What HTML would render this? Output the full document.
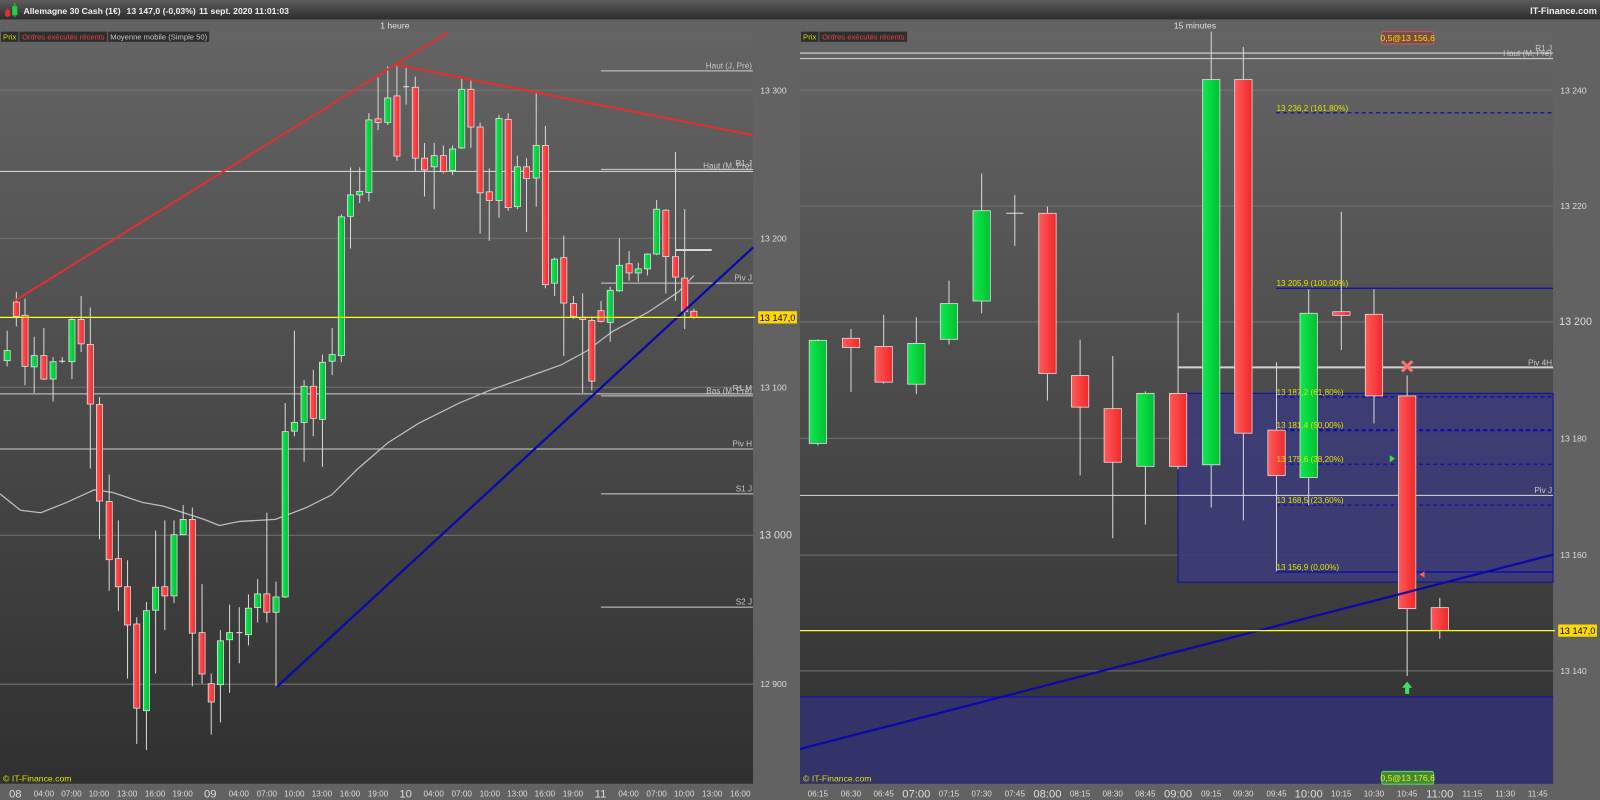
<!DOCTYPE html>
<html><head><meta charset="utf-8"><style>
html,body{margin:0;padding:0;background:#5f5f5f;overflow:hidden}
svg{display:block}
text{font-family:"Liberation Sans",Arial,sans-serif}
</style></head><body>
<svg id="s" width="1600" height="800" viewBox="0 0 3136 1568" xmlns="http://www.w3.org/2000/svg">
<defs>
<linearGradient id="top" x1="0" y1="0" x2="0" y2="1"><stop offset="0" stop-color="#5c5c5c"/><stop offset="1" stop-color="#2c2c2c"/></linearGradient>
<linearGradient id="plot" x1="0" y1="0" x2="0" y2="1"><stop offset="0" stop-color="#646464"/><stop offset="1" stop-color="#303030"/></linearGradient>
<linearGradient id="gG" x1="0" y1="0" x2="1" y2="0"><stop offset="0" stop-color="#10e850"/><stop offset="1" stop-color="#00c030"/></linearGradient>
<linearGradient id="gR" x1="0" y1="0" x2="1" y2="0"><stop offset="0" stop-color="#ff5a5a"/><stop offset="1" stop-color="#f02828"/></linearGradient>
</defs>
<rect x="0" y="0" width="3136" height="1568" fill="#626262"/>
<rect x="0" y="0" width="3136" height="38" fill="url(#top)"/>
<rect x="0" y="62" width="1476" height="1474" fill="url(#plot)"/>
<rect x="1568" y="62" width="1476" height="1474" fill="url(#plot)"/>
<g id="L"></g>
<g id="R" transform="translate(1568,0)"></g>

<rect x="10" y="20" width="10" height="12" fill="#e03030"/><line x1="15" y1="16" x2="15" y2="34" stroke="#e03030" stroke-width="2"/>
<rect x="24" y="12" width="10" height="18" fill="#20d040"/><line x1="29" y1="6" x2="29" y2="34" stroke="#20d040" stroke-width="2"/>
<g font-size="17" fill="#f0f0f0" font-weight="bold">
<text x="46" y="27">Allemagne 30 Cash (1€)</text>
<text x="248" y="27">13 147,0 (-0,03%)</text>
<text x="390" y="27">11 sept. 2020 11:01:03</text>
</g>
<text x="3130" y="27" font-size="18" fill="#f0f0f0" font-weight="bold" text-anchor="end">IT-Finance.com</text>
<text x="774" y="56" font-size="17" fill="#e0e0e0" text-anchor="middle">1 heure</text>
<text x="2342" y="56" font-size="17" fill="#e0e0e0" text-anchor="middle">15 minutes</text>

<rect x="2" y="62" width="34" height="20" fill="#2e2e2e"/><text x="6" y="77" font-size="15" fill="#d8d800" textLength="26">Prix</text>
<rect x="38" y="62" width="172" height="20" fill="#2e2e2e"/><text x="43" y="77" font-size="15" fill="#e04848" textLength="162">Ordres exécutés récents</text>
<rect x="212" y="62" width="198" height="20" fill="#2e2e2e"/><text x="216" y="77" font-size="15" fill="#c8c8c8" textLength="190">Moyenne mobile (Simple 50)</text>
<rect x="1570" y="62" width="34" height="20" fill="#2e2e2e"/><text x="1574" y="77" font-size="15" fill="#d8d800" textLength="26">Prix</text>
<rect x="1606" y="62" width="172" height="20" fill="#2e2e2e"/><text x="1611" y="77" font-size="15" fill="#e04848" textLength="162">Ordres exécutés récents</text>

<g font-size="17" fill="#dcdcdc">
<text x="1490" y="183">13 300</text><text x="1490" y="473">13 200</text><text x="1490" y="765">13 100</text>
<text x="1488" y="1055" font-size="21">13 000</text><text x="1490" y="1347">12 900</text>
<text x="3058" y="183">13 240</text><text x="3058" y="410">13 220</text><text x="3056" y="637" font-size="21">13 200</text>
<text x="3058" y="865">13 180</text><text x="3058" y="1094">13 160</text><text x="3058" y="1321">13 140</text>
</g>
<rect x="1486" y="610" width="76" height="24" fill="#ffd800"/><text x="1489" y="629" font-size="18" fill="#000" textLength="70">13 147,0</text>
<rect x="3054" y="1224" width="76" height="24" fill="#ffd800"/><text x="3057" y="1243" font-size="18" fill="#000" textLength="70">13 147,0</text>

<g font-size="16" fill="#c8c8c8" text-anchor="end">
<text x="1474" y="134">Haut (J, Pré)</text><text x="1474" y="330">Haut (M, Pré)</text><text x="1474" y="325">R1 J</text>
<text x="1474" y="550">Piv J</text><text x="1474" y="771">Bas (M, Pré)</text><text x="1474" y="766">R1 M</text>
<text x="1474" y="875">Piv H</text><text x="1474" y="963">S1 J</text><text x="1474" y="1185">S2 J</text>
<text x="3042" y="100">R1 J</text><text x="3042" y="110">Haut (M, Pré)</text>
<text x="3042" y="716">Piv 4H</text><text x="3042" y="966">Piv J</text>
</g>
<g font-size="16" fill="#e0e000">
<text x="2502" y="218">13 236,2 (161,80%)</text><text x="2502" y="561">13 205,9 (100,00%)</text>
<text x="2502" y="774">13 187,2 (61,80%)</text><text x="2502" y="839">13 181,4 (50,00%)</text>
<text x="2502" y="906">13 175,6 (38,20%)</text><text x="2502" y="986">13 168,5 (23,60%)</text>
<text x="2502" y="1117">13 156,9 (0,00%)</text>
</g>
<text x="6" y="1532" font-size="17" fill="#e0e000">© IT-Finance.com</text>
<text x="1574" y="1532" font-size="17" fill="#e0e000">© IT-Finance.com</text>

<rect x="2708" y="62" width="102" height="24" rx="4" fill="#7a4a48" stroke="#c85a5a" stroke-width="2"/><text x="2759" y="80" font-size="17" fill="#f0e000" text-anchor="middle">0,5@13 156,6</text>
<rect x="2708" y="1512" width="102" height="25" rx="4" fill="#3f8a3a" stroke="#6c6" stroke-width="2"/><text x="2759" y="1531" font-size="17" fill="#f0f000" text-anchor="middle">0,5@13 176,6</text>

<g id="T" font-size="16" fill="#dcdcdc" text-anchor="middle"></g>
</svg>
<script>
var NS="http://www.w3.org/2000/svg";
function el(p,t,a){var e=document.createElementNS(NS,t);for(var k in a)e.setAttribute(k,a[k]);p.appendChild(e);return e;}
var L=document.getElementById('L'),R=document.getElementById('R'),T=document.getElementById('T');
[177,467,759,1049,1341].forEach(function(y){el(L,'line',{x1:0,x2:1476,y1:y,y2:y,stroke:'#727272','stroke-width':2});});
[177,404,631,859,1088,1315].forEach(function(y){el(R,'line',{x1:0,x2:1476,y1:y,y2:y,stroke:'#727272','stroke-width':2});});
el(R,'rect',{x:0,y:1366,width:1476,height:170,fill:'#33336a'});
el(R,'line',{x1:0,x2:1476,y1:1366,y2:1366,stroke:'#1010b0','stroke-width':2});
el(R,'rect',{x:741,y:771,width:735,height:370,fill:'#3c3c78',opacity:0.9,stroke:'#0a0aa8','stroke-width':2});
[336,772,880].forEach(function(y){el(L,'line',{x1:0,x2:1476,y1:y,y2:y,stroke:'#d0d0d0','stroke-width':2});});
[139,332,555,776,968,1190].forEach(function(y){el(L,'line',{x1:1178,x2:1476,y1:y,y2:y,stroke:'#d0d0d0','stroke-width':2});});
el(L,'line',{x1:1325,x2:1395,y1:490,y2:490,stroke:'#d8d8d8','stroke-width':4});
el(L,'polyline',{points:'0,968 40,1000 80,1005 130,985 185,960 220,965 280,985 320,992 360,1005 400,1018 430,1030 470,1022 540,1018 600,995 650,970 700,920 760,868 820,830 900,790 960,765 1050,733 1100,715 1150,688 1200,650 1270,612 1330,572 1360,540',fill:'none',stroke:'#bdbdbd','stroke-width':2.5});
[104,115,971].forEach(function(y){el(R,'line',{x1:0,x2:1476,y1:y,y2:y,stroke:'#d8d8d8','stroke-width':2});});
el(R,'line',{x1:741,x2:1476,y1:720,y2:720,stroke:'#d0d0d0','stroke-width':4});
[[221,1],[778,1],[843,2],[910,1],[990,1]].forEach(function(a){el(R,'line',{x1:933,x2:1476,y1:a[0],y2:a[0],stroke:'#0c0cb4','stroke-width':a[1]*2+0.5,'stroke-dasharray':'8,6'});});
[565,1121].forEach(function(y){el(R,'line',{x1:933,x2:1476,y1:y,y2:y,stroke:'#0c0cb4','stroke-width':2.5});});
function candles(g,arr,w){arr.forEach(function(c){var x=c[0];
 el(g,'line',{x1:x,x2:x,y1:c[4],y2:c[5],stroke:'#d8d8d8','stroke-width':2});
 if(c[1]=='D'){el(g,'line',{x1:x-w/2,x2:x+w/2,y1:c[2],y2:c[2],stroke:'#e0e0e0','stroke-width':2});return;}
 el(g,'rect',{x:x-w/2,y:c[2],width:w,height:Math.max(2,c[3]-c[2]),fill:c[1]=='G'?'url(#gG)':'url(#gR)',stroke:'#e6e6e6','stroke-width':1.5});});}
candles(L,[[14,'G',687,707,648,718],[32,'R',592,620,572,640],[49,'R',618,718,585,755],[67,'G',697,719,660,770],[86,'R',697,743,643,745],[104,'G',709,743,700,787],[122,'D',708,708,700,712],[141,'G',626,709,620,743],[159,'R',626,674,580,690],[177,'R',675,792,603,918],[195,'R',793,982,778,1057],[214,'R',983,1097,930,1158],[232,'R',1095,1150,1020,1198],[250,'R',1150,1225,1098,1330],[268,'R',1223,1388,1210,1458],[287,'G',1197,1393,1180,1470],[305,'G',1151,1196,1040,1320],[323,'R',1150,1168,1020,1235],[341,'G',1048,1168,1020,1182],[359,'G',1018,1048,990,1040],[377,'R',1018,1241,995,1345],[396,'R',1240,1321,1145,1340],[414,'R',1340,1376,1320,1440],[432,'G',1256,1342,1235,1416],[450,'G',1240,1254,1185,1358],[469,'D',1240,1240,1190,1300],[487,'G',1192,1244,1165,1265],[505,'G',1164,1191,1135,1220],[523,'R',1164,1200,1005,1220],[541,'G',1170,1200,1140,1345],[559,'G',846,1170,790,1172],[577,'G',828,845,648,855],[596,'G',757,828,745,905],[614,'R',757,820,725,855],[632,'G',710,822,695,915],[651,'G',695,708,643,735],[669,'G',425,697,420,710],[687,'G',382,424,328,487],[705,'G',375,382,328,398],[723,'G',235,377,222,395],[741,'R',233,240,152,255],[760,'G',192,240,130,245],[778,'R',188,306,130,315],[796,'D',170,170,130,205],[814,'R',171,310,150,335],[832,'R',310,333,280,385],[851,'G',305,327,280,410],[869,'R',305,336,285,340],[887,'G',292,334,285,343],[905,'G',175,290,155,292],[923,'R',175,249,155,290],[941,'R',249,378,240,458],[959,'R',376,393,330,472],[978,'G',232,393,225,427],[996,'R',234,407,222,413],[1014,'G',327,405,305,410],[1032,'R',327,350,310,455],[1051,'G',285,349,180,405],[1069,'R',285,558,247,565],[1087,'G',508,555,505,580],[1105,'R',505,594,462,698],[1124,'R',595,620,580,625],[1142,'R',622,626,575,770],[1160,'R',628,747,620,765],[1178,'R',609,630,590,632],[1196,'G',569,632,562,670],[1214,'G',520,570,467,572],[1233,'R',517,535,492,550],[1251,'G',527,535,515,552],[1269,'G',498,527,497,540],[1287,'G',410,498,392,500],[1305,'R',412,503,410,575],[1324,'R',503,543,298,590],[1342,'R',545,610,410,645],[1360,'R',610,622,605,625]],12);
candles(R,[[35,'G',667,869,665,873],[100,'R',663,681,645,768],[164,'R',679,749,617,752],[228,'G',673,753,622,772],[292,'G',595,665,550,675],[356,'G',413,590,340,614],[421,'D',418,418,382,482],[485,'R',418,732,405,785],[549,'R',736,798,666,932],[613,'R',801,906,698,1055],[677,'G',771,914,767,1028],[741,'R',771,914,613,920],[806,'G',156,911,62,995],[869,'R',156,849,92,1020],[934,'R',843,932,710,1120],[997,'G',614,936,567,990],[1061,'R',611,618,415,686],[1125,'R',616,776,567,830],[1190,'R',776,1193,736,1325],[1254,'R',1191,1236,1172,1252]],34);
el(L,'polyline',{points:'28,590 880,62',fill:'none',stroke:'#e03030','stroke-width':4});
el(L,'line',{x1:780,y1:128,x2:1476,y2:265,stroke:'#e03030','stroke-width':4});
el(L,'line',{x1:543,y1:1346,x2:1476,y2:485,stroke:'#0a0aa8','stroke-width':4.5});
el(R,'line',{x1:0,y1:1468,x2:1476,y2:1087,stroke:'#0a0aa8','stroke-width':4.5});
el(L,'line',{x1:0,x2:1480,y1:622,y2:622,stroke:'#ffff20','stroke-width':2.5});
el(R,'line',{x1:0,x2:1480,y1:1236,y2:1236,stroke:'#ffff20','stroke-width':2.5});
el(R,'path',{d:'M1180,708 L1200,728 M1200,708 L1180,728',stroke:'#ff7070','stroke-width':6});
el(R,'path',{d:'M1156,892 L1166,899 L1156,906Z',fill:'#40e040'});
el(R,'path',{d:'M1224,1120 L1214,1126 L1224,1132Z',fill:'#ff6060'});
el(R,'path',{d:'M1190,1336 L1200,1348 L1194,1348 L1194,1360 L1186,1360 L1186,1348 L1180,1348Z',fill:'#40e060'});
var tl=[[30,'08',1],[86,'04:00'],[140,'07:00'],[194,'10:00'],[249,'13:00'],[304,'16:00'],[358,'19:00'],[412,'09',1],[468,'04:00'],[523,'07:00'],[577,'10:00'],[631,'13:00'],[686,'16:00'],[741,'19:00'],[795,'10',1],[850,'04:00'],[905,'07:00'],[960,'10:00'],[1014,'13:00'],[1068,'16:00'],[1123,'19:00'],[1177,'11',1],[1232,'04:00'],[1287,'07:00'],[1341,'10:00'],[1396,'13:00'],[1451,'16:00']];
var tr=[[35,'06:15'],[100,'06:30'],[164,'06:45'],[228,'07:00',1],[292,'07:15'],[356,'07:30'],[421,'07:45'],[485,'08:00',1],[549,'08:15'],[613,'08:30'],[677,'08:45'],[741,'09:00',1],[806,'09:15'],[869,'09:30'],[934,'09:45'],[997,'10:00',1],[1061,'10:15'],[1125,'10:30'],[1190,'10:45'],[1254,'11:00',1],[1318,'11:15'],[1382,'11:30'],[1446,'11:45']];
function tx(a,off){a.forEach(function(t){var e=el(T,'text',{x:t[0]+off,y:t[2]?1563:1561,'font-size':t[2]?22:16});e.textContent=t[1];});}
tx(tl,0);tx(tr,1568);
</script>
</body></html>
